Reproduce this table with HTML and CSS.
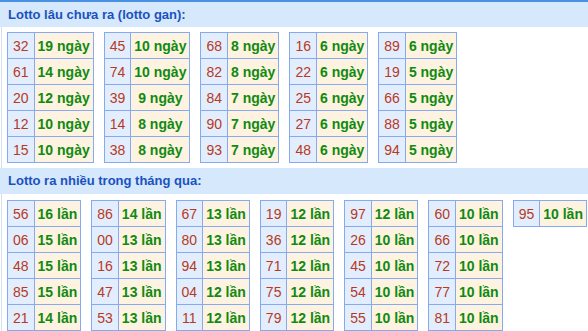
FILE: index.html
```html
<!DOCTYPE html>
<html>
<head>
<meta charset="utf-8">
<link rel="stylesheet" href="styles.css">
</head>
<body>
<div class="box">
  <div class="head">Lotto lâu chưa ra (lotto gan):</div>
  <div class="content">
    <table class="t"><tbody>
      <tr><td class="n">32</td><td class="v">19 ngày</td></tr>
      <tr><td class="n">61</td><td class="v">14 ngày</td></tr>
      <tr><td class="n">20</td><td class="v">12 ngày</td></tr>
      <tr><td class="n">12</td><td class="v">10 ngày</td></tr>
      <tr><td class="n">15</td><td class="v">10 ngày</td></tr>
    </tbody></table>
    <table class="t"><tbody>
      <tr><td class="n">45</td><td class="v">10 ngày</td></tr>
      <tr><td class="n">74</td><td class="v">10 ngày</td></tr>
      <tr><td class="n">39</td><td class="v">9 ngày</td></tr>
      <tr><td class="n">14</td><td class="v">8 ngày</td></tr>
      <tr><td class="n">38</td><td class="v">8 ngày</td></tr>
    </tbody></table>
    <table class="t"><tbody>
      <tr><td class="n">68</td><td class="v">8 ngày</td></tr>
      <tr><td class="n">82</td><td class="v">8 ngày</td></tr>
      <tr><td class="n">84</td><td class="v">7 ngày</td></tr>
      <tr><td class="n">90</td><td class="v">7 ngày</td></tr>
      <tr><td class="n">93</td><td class="v">7 ngày</td></tr>
    </tbody></table>
    <table class="t"><tbody>
      <tr><td class="n">16</td><td class="v">6 ngày</td></tr>
      <tr><td class="n">22</td><td class="v">6 ngày</td></tr>
      <tr><td class="n">25</td><td class="v">6 ngày</td></tr>
      <tr><td class="n">27</td><td class="v">6 ngày</td></tr>
      <tr><td class="n">48</td><td class="v">6 ngày</td></tr>
    </tbody></table>
    <table class="t"><tbody>
      <tr><td class="n">89</td><td class="v">6 ngày</td></tr>
      <tr><td class="n">19</td><td class="v">5 ngày</td></tr>
      <tr><td class="n">66</td><td class="v">5 ngày</td></tr>
      <tr><td class="n">88</td><td class="v">5 ngày</td></tr>
      <tr><td class="n">94</td><td class="v">5 ngày</td></tr>
    </tbody></table>
  </div>
  <div class="head head2">Lotto ra nhiều trong tháng qua:</div>
  <div class="content">
    <table class="t"><tbody>
      <tr><td class="n">56</td><td class="v">16 lần</td></tr>
      <tr><td class="n">06</td><td class="v">15 lần</td></tr>
      <tr><td class="n">48</td><td class="v">15 lần</td></tr>
      <tr><td class="n">85</td><td class="v">15 lần</td></tr>
      <tr><td class="n">21</td><td class="v">14 lần</td></tr>
    </tbody></table>
    <table class="t"><tbody>
      <tr><td class="n">86</td><td class="v">14 lần</td></tr>
      <tr><td class="n">00</td><td class="v">13 lần</td></tr>
      <tr><td class="n">16</td><td class="v">13 lần</td></tr>
      <tr><td class="n">47</td><td class="v">13 lần</td></tr>
      <tr><td class="n">53</td><td class="v">13 lần</td></tr>
    </tbody></table>
    <table class="t"><tbody>
      <tr><td class="n">67</td><td class="v">13 lần</td></tr>
      <tr><td class="n">80</td><td class="v">13 lần</td></tr>
      <tr><td class="n">94</td><td class="v">13 lần</td></tr>
      <tr><td class="n">04</td><td class="v">12 lần</td></tr>
      <tr><td class="n">11</td><td class="v">12 lần</td></tr>
    </tbody></table>
    <table class="t"><tbody>
      <tr><td class="n">19</td><td class="v">12 lần</td></tr>
      <tr><td class="n">36</td><td class="v">12 lần</td></tr>
      <tr><td class="n">71</td><td class="v">12 lần</td></tr>
      <tr><td class="n">75</td><td class="v">12 lần</td></tr>
      <tr><td class="n">79</td><td class="v">12 lần</td></tr>
    </tbody></table>
    <table class="t"><tbody>
      <tr><td class="n">97</td><td class="v">12 lần</td></tr>
      <tr><td class="n">26</td><td class="v">10 lần</td></tr>
      <tr><td class="n">45</td><td class="v">10 lần</td></tr>
      <tr><td class="n">54</td><td class="v">10 lần</td></tr>
      <tr><td class="n">55</td><td class="v">10 lần</td></tr>
    </tbody></table>
    <table class="t"><tbody>
      <tr><td class="n">60</td><td class="v">10 lần</td></tr>
      <tr><td class="n">66</td><td class="v">10 lần</td></tr>
      <tr><td class="n">72</td><td class="v">10 lần</td></tr>
      <tr><td class="n">77</td><td class="v">10 lần</td></tr>
      <tr><td class="n">81</td><td class="v">10 lần</td></tr>
    </tbody></table>
    <table class="t"><tbody>
      <tr><td class="n">95</td><td class="v">10 lần</td></tr>
    </tbody></table>
  </div>
</div>
</body>
</html>
```
FILE: styles.css
```css
html, body {
  margin: 0;
  padding: 0;
  background: #ffffff;
}
body {
  font-family: "Liberation Sans", Arial, sans-serif;
  width: 588px;
  height: 331px;
  overflow: hidden;
}
.box {
  border-top: 2px solid #4a90e2;
}
.head {
  height: 25px;
  line-height: 25px;
  background: #d5e8fc;
  color: #1a52c0;
  font-size: 13px;
  font-weight: bold;
  padding-left: 8px;
}
.head2 {
  height: 26px;
  line-height: 26px;
}
.content {
  margin-left: 1px;
  border-left: 1px solid #d3deee;
  padding: 5px 0 5px 5px;
  display: flex;
  align-items: flex-start;
  gap: 10px;
}
.head2 + .content {
  padding-top: 6px;
}
.t {
  border-collapse: separate;
  border-spacing: 0;
  border-top: 1px solid #86aaf0;
  border-left: 1px solid #86aaf0;
  font-size: 14px;
}
.t td {
  height: 25px;
  padding: 0;
  border-right: 1px solid #86aaf0;
  border-bottom: 1px solid #86aaf0;
  text-align: center;
  white-space: nowrap;
  line-height: 16px;
}
.t td.n {
  background: #e2eefd;
  color: #b8391c;
  padding: 0 5px;
}
.t td.v {
  background: #fef3e1;
  color: #108a10;
  font-weight: bold;
  padding: 0 3px;
}
```
